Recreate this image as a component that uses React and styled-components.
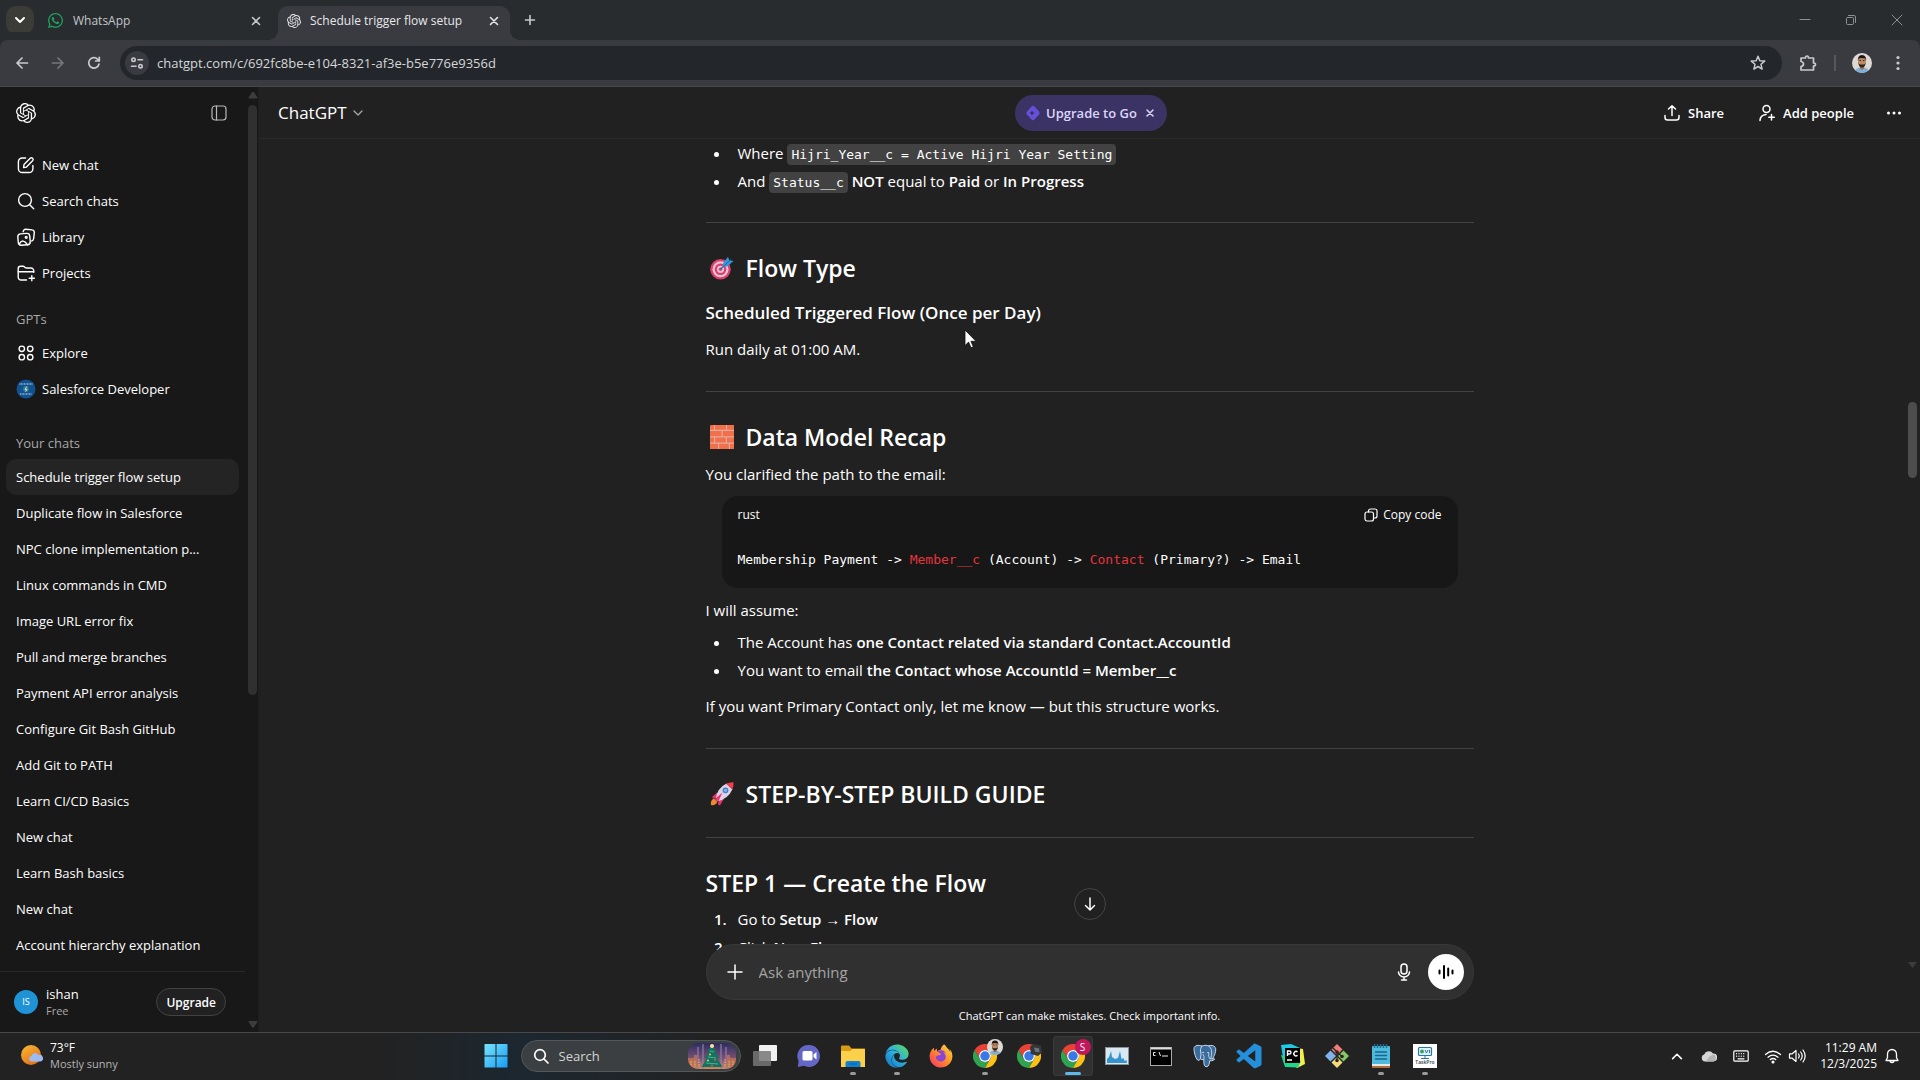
import styled, { createGlobalStyle, css } from "styled-components";
import { FaWhatsapp, FaEdge, FaFirefoxBrowser } from "react-icons/fa";
import { BiLogoVisualStudio } from "react-icons/bi";

const GlobalStyle = createGlobalStyle`
    * { box-sizing: border-box; }
    body {
        margin: 0;
        background-color: #212121;
        color: #fff;
        font-family: "Open Sans", "Noto Sans", sans-serif;
        font-size: 13px;
        overflow: hidden;
    }
    button, input { font: inherit; color: inherit; }
    button {
        display: flex;
        align-items: center;
        justify-content: center;
        padding: 0;
        border: none;
        background: none;
        cursor: pointer;
    }
    a { color: inherit; text-decoration: none; }
    svg { display: block; flex: none; }
`

const Screen = styled.div`
    position: relative;
    display: flex;
    flex-direction: column;
    height: 100vh;
`

/* ---------- browser ---------- */

const TabStrip = styled.header`
    display: flex;
    align-items: stretch;
    height: 40px;
    padding: 6px 0 0 6px;
    background-color: #292c2e;
    font-size: 12px;
`

const TabSearch = styled.button`
    width: 28px;
    height: 28px;
    border-radius: 10px;
    background-color: #3b3b38;
    color: #fff;
`

const Tab = styled.div`
    position: relative;
    display: flex;
    align-items: center;
    gap: 9px;
    width: ${(props) => props.$active ? "232px" : "244px"};
    padding: ${(props) => props.$active ? "0 8px 5px 9px" : "0 14px 5px 13px"};
    border-radius: 10px 10px 0 0;
    color: ${(props) => props.$active ? "#e8e8ea" : "#c3c6ca"};
    background-color: ${(props) => props.$active ? "#393b40" : "transparent"};
    ${(props) => props.$active && css`
        &::before, &::after {
            content: "";
            position: absolute;
            bottom: 0;
            width: 10px;
            height: 10px;
        }
        &::before {
            left: -10px;
            background: radial-gradient(circle at 0 0, transparent 10px, #393b40 10px);
        }
        &::after {
            right: -10px;
            background: radial-gradient(circle at 100% 0, transparent 10px, #393b40 10px);
        }
    `}
`

const TabTitle = styled.span`
    flex: 1;
    line-height: 16px;
`

const NewTab = styled.button`
    width: 28px;
    height: 28px;
    margin-left: 6px;
    color: #c8cace;
`

const WindowButtons = styled.div`
    display: flex;
    margin-left: auto;
    height: 28px;
    color: #8d9093;
    button { width: 46px; }
`

const Toolbar = styled.div`
    display: flex;
    align-items: center;
    height: 47px;
    padding: 0 4px;
    border-bottom: 1px solid #45484d;
    border-radius: 8px 8px 0 0;
    background-color: #393b40;
    box-shadow: 0 -8px 0 #292c2e;
    color: #c7cacf;
`

const ToolButton = styled.button`
    width: 36px;
    height: 34px;
    color: ${(props) => props.$dim ? "#74777b" : "#c7cacf"};
`

const AddressBar = styled.div`
    display: flex;
    flex: 1;
    align-items: center;
    height: 34px;
    margin: 0 8px;
    padding: 0 15px 0 5px;
    border-radius: 17px;
    background-color: #23262a;
`

const SiteInfo = styled.button`
    width: 24px;
    height: 24px;
    border-radius: 50%;
    background-color: #393b40;
`

const Url = styled.input`
    flex: 1;
    margin: 0 8px;
    padding: 0;
    border: none;
    outline: none;
    background: none;
    color: #d5d7da;
    font-size: 13px;
    line-height: 20px;
`

const ToolDivider = styled.div`
    width: 2px;
    height: 16px;
    margin: 0 8px;
    background-color: #54575c;
`

/* ---------- sidebar ---------- */

const AppBody = styled.div`
    display: flex;
    flex: 1;
    min-height: 0;
`

const Sidebar = styled.aside`
    display: flex;
    width: 259px;
    background-color: #181818;
    border-right: 1px solid #1e1e1e;
`

const SidebarContent = styled.div`
    display: flex;
    flex: 1;
    flex-direction: column;
    min-width: 0;
`

const SidebarTop = styled.div`
    display: flex;
    align-items: center;
    justify-content: space-between;
    height: 52px;
    margin-bottom: 8px;
    padding: 0 19px 0 16px;
    button { color: #b8b8b8; }
`

const NavGroup = styled.nav`
    display: flex;
    flex-direction: column;
    margin-bottom: ${(props) => props.$gap}px;
    padding: 0 9px 0 6px;
`

const NavLabel = styled.h2`
    margin: 0;
    padding: 0 10px;
    font-size: 13px;
    font-weight: 400;
    line-height: 32px;
    color: #a8a8a8;
`

const NavItem = styled.a`
    display: flex;
    align-items: center;
    gap: 6px;
    height: 36px;
    padding: 0 10px;
    border-radius: 10px;
    line-height: 20px;
    white-space: nowrap;
    background-color: ${(props) => props.$active ? "#242424" : "transparent"};
`

const Account = styled.div`
    display: flex;
    align-items: center;
    gap: 8px;
    flex: 1;
    margin: 0 3px 0 0;
    padding: 0 19px 0 14px;
    border-top: 1px solid #282828;
`

const Initials = styled.span`
    width: 24px;
    border-radius: 50%;
    background-color: #1f93d6;
    font-size: 9px;
    line-height: 24px;
    text-align: center;
`

const AccountName = styled.div`
    flex: 1;
    line-height: 18px;
    small {
        display: block;
        font-size: 11px;
        line-height: 16px;
        color: #a8a8a8;
    }
`

const UpgradeButton = styled.button`
    height: 28px;
    padding: 0 9px;
    border: 1px solid #424242;
    border-radius: 14px;
    background-color: #212121;
    font-size: 12px;
    font-weight: 600;
`

const SideScroll = styled.div`
    display: flex;
    flex-direction: column;
    align-items: center;
    width: 9px;
    margin-right: 1px;
    padding: 4px 0;
    color: #3c3c3c;
    &::after {
        content: "";
        order: 1;
        flex: 1;
    }
    svg:last-child { order: 2; }
`

const SideThumb = styled.div`
    width: 9px;
    height: 63%;
    margin-top: 6px;
    border-radius: 5px;
    background-color: #303030;
`

/* ---------- conversation ---------- */

const Main = styled.main`
    position: relative;
    display: flex;
    flex: 1;
    flex-direction: column;
    min-width: 0;
`

const ChatHeader = styled.div`
    display: grid;
    grid-template-columns: 1fr auto 1fr;
    align-items: center;
    height: 52px;
    flex: none;
    padding: 0 16px 0 19px;
    border-bottom: 1px solid #2b2b2b;
`

const ModelButton = styled.button`
    justify-self: start;
    gap: 3px;
    font-size: 17px;
    svg { color: #a8a8a8; }
`

const GoPill = styled.div`
    display: flex;
    align-items: center;
    gap: 9px;
    height: 36px;
    padding: 0 13px 0 11px;
    border-radius: 18px;
    background-color: #3b3363;
    button { gap: 6px; }
    color: #dcd6fb;
    font-weight: 600;
`

const HeaderActions = styled.div`
    display: flex;
    align-items: center;
    justify-self: end;
    font-weight: 600;
    button { gap: 7px; }
    button + button { margin-left: 34px; }
    button:last-child { margin-left: 30px; }
`

const Thread = styled.div`
    flex: 1;
    min-height: 0;
    overflow: hidden;
`

const Message = styled.article`
    width: 768px;
    max-width: 100%;
    margin: 0 auto;
    font-size: 15px;
    line-height: 28px;
    p { margin: 8px 0 0; }
    strong { font-weight: 600; }
    ul, ol {
        margin: 4px 0 0;
        padding-left: 25px;
    }
    li { padding-left: 7px; }
    ul:first-child { margin: 0; }
    h2 + p { margin-top: 7px; }
    h2 + ol { margin-top: 6px; }
    ol li::marker { font-weight: 600; }
    li::marker { color: #fff; }
`

const Rule = styled.hr`
    height: 1px;
    margin: 28px 0 29px;
    border: none;
    background-color: #434343;
    ul + &, h2 + & { margin-top: 27px; }
`

const Heading = styled.h2`
    display: flex;
    align-items: center;
    gap: 12px;
    margin: 0;
    padding-left: ${(props) => props.$icon ? "4px" : "0"};
    font-size: 23px;
    font-weight: 600;
    line-height: 32px;
`

const SubHeading = styled.h3`
    margin: 15px 0 0;
    font-size: 17px;
    font-weight: 600;
    line-height: 28px;
`

const InlineCode = styled.code`
    padding: 3px 4px;
    border-radius: 4px;
    background-color: #424242;
    font-family: "DejaVu Sans Mono", monospace;
    font-size: 13px;
    line-height: 16px;
`

const CodeBlock = styled.section`
    height: 92px;
    margin: 8px 16px 0;
    padding: 5px 16px 0;
    border-radius: 16px;
    background-color: #171717;
    font-size: 12px;
    pre {
        margin: 17px 0 0;
        font-family: "DejaVu Sans Mono", monospace;
        font-size: 13px;
        line-height: 28px;
    }
    mark {
        background: none;
        color: #e5343c;
    }
`

const CodeBar = styled.div`
    display: flex;
    justify-content: space-between;
    button { gap: 4px; }
`

const Dock = styled.div`
    position: relative;
    display: flex;
    flex-direction: column;
    align-items: center;
    margin-top: -6px;
    background: linear-gradient(transparent 6px, #212121 6px);
`

const ScrollDown = styled.button`
    position: absolute;
    bottom: 112px;
    left: 50%;
    width: 32px;
    height: 32px;
    margin-left: -16px;
    border: 1px solid #454545;
    border-radius: 50%;
    background-color: #212121;
`

const Composer = styled.form`
    display: flex;
    align-items: center;
    width: 768px;
    max-width: 100%;
    height: 56px;
    padding: 0 9px 0 18px;
    border: 1px solid #383838;
    border-radius: 28px;
    background-color: #303030;
`

const Prompt = styled.input`
    flex: 1;
    margin-left: 14px;
    padding: 0;
    border: none;
    outline: none;
    background: none;
    font-size: 15px;
    &::placeholder {
        color: #a5a5a5;
        opacity: 1;
    }
`

const VoiceButton = styled.button`
    width: 36px;
    height: 36px;
    margin-left: 14px;
    border-radius: 50%;
    background-color: #fff;
    color: #000;
`

const Disclaimer = styled.p`
    margin: 0;
    font-size: 11px;
    line-height: 32px;
`

const PageThumb = styled.div`
    position: absolute;
    top: 315px;
    right: 3px;
    width: 9px;
    height: 76px;
    border-radius: 5px;
    background-color: #4d4d4d;
`

const PageScrollEnd = styled.svg`
    position: absolute;
    right: 3px;
    bottom: 64px;
    color: #3c3c3c;
`

/* ---------- taskbar ---------- */

const Taskbar = styled.footer`
    display: grid;
    grid-template-columns: 1fr auto 1fr;
    align-items: center;
    height: 48px;
    flex: none;
    padding-bottom: 1px;
    border-top: 1px solid #484848;
    background: linear-gradient(90deg, #222 20%, #1c2730 27%, #222 37%);
    font-size: 12px;
    line-height: 16px;
`

const Weather = styled.button`
    justify-self: start;
    gap: 6px;
    margin-left: 20px;
    text-align: left;
    span {
        display: block;
        color: #b4b4b4;
        font-size: 11px;
    }
`

const Apps = styled.div`
    display: flex;
    align-items: center;
`

const TaskApp = styled.button`
    position: relative;
    width: 40px;
    height: 40px;
    margin: 0 2px;
    border-radius: 4px;
    background-color: ${(props) => props.$state === "active" ? "#303030" : "transparent"};
    box-shadow: ${(props) => props.$state === "active" ? "inset 0 0 0 1px #3a3a3a" : "none"};
    &::after {
        content: "";
        position: absolute;
        bottom: 1px;
        left: 50%;
        display: ${(props) => props.$state ? "block" : "none"};
        width: ${(props) => props.$state === "active" ? "16px" : "6px"};
        height: 3px;
        border-radius: 2px;
        background-color: ${(props) => props.$state === "active" ? "#5fb8ea" : "#9a9a9a"};
        transform: translateX(-50%);
    }
`

const TaskSearch = styled.label`
    display: flex;
    align-items: center;
    gap: 10px;
    width: 220px;
    height: 32px;
    margin: 0 2px 0 3px;
    padding: 0 4px 0 11px;
    border: 1px solid #53575a;
    border-radius: 16px;
    background-color: #3b3f42;
    input {
        flex: 1;
        min-width: 0;
        padding: 0;
        border: none;
        outline: none;
        background: none;
        font-size: 13px;
    }
    input::placeholder { color: #d4d4d4; opacity: 1; }
`

const Tray = styled.div`
    display: flex;
    align-items: center;
    justify-self: end;
    padding-right: 20px;
`

const TrayButton = styled.button`
    width: ${(props) => props.$wide ? "56px" : "32px"};
    height: 32px;
    gap: 6px;
`

const Clock = styled.button`
    display: block;
    margin: 0 7px;
    text-align: right;
    font-size: 12px;
`

const Pointer = styled.svg`
    position: absolute;
    top: 329px;
    left: 964px;
    pointer-events: none;
`

/* ---------- icons ---------- */

function Line({ size = 20, box = 20, width = 1.4, children }) {
    return (
        <svg width={size} height={size} viewBox={`0 0 ${box} ${box}`} fill="none" stroke="currentColor"
            strokeWidth={width} strokeLinecap="round" strokeLinejoin="round" aria-hidden="true">
            {children}
        </svg>
    )
}

function Knot({ size }) {
    return (
        <svg width={size} height={size} viewBox="0 0 24 24" fill="currentColor" aria-hidden="true">
            <path d="M22.2819 9.8211a5.9847 5.9847 0 0 0-.5157-4.9108 6.0462 6.0462 0 0 0-6.5098-2.9A6.0651 6.0651 0 0 0 4.9807 4.1818a5.9847 5.9847 0 0 0-3.9977 2.9 6.0462 6.0462 0 0 0 .7427 7.0966 5.98 5.98 0 0 0 .511 4.9107 6.051 6.051 0 0 0 6.5146 2.9001A5.9847 5.9847 0 0 0 13.2599 24a6.0557 6.0557 0 0 0 5.7718-4.2058 5.9894 5.9894 0 0 0 3.9977-2.9001 6.0557 6.0557 0 0 0-.7475-7.0729zm-9.022 12.6081a4.4755 4.4755 0 0 1-2.8764-1.0408l.1419-.0804 4.7783-2.7582a.7948.7948 0 0 0 .3927-.6813v-6.7369l2.02 1.1686a.071.071 0 0 1 .038.052v5.5826a4.504 4.504 0 0 1-4.4945 4.4944zm-9.6607-4.1254a4.4708 4.4708 0 0 1-.5346-3.0137l.142.0852 4.783 2.7582a.7712.7712 0 0 0 .7806 0l5.8428-3.3685v2.3324a.0804.0804 0 0 1-.0332.0615L9.74 19.9502a4.4992 4.4992 0 0 1-6.1408-1.6464zM2.3408 7.8956a4.485 4.485 0 0 1 2.3655-1.9728V11.6a.7664.7664 0 0 0 .3879.6765l5.8144 3.3543-2.0201 1.1685a.0757.0757 0 0 1-.071 0l-4.8303-2.7865A4.504 4.504 0 0 1 2.3408 7.872zm16.5963 3.8558L13.1038 8.364 15.1192 7.2a.0757.0757 0 0 1 .071 0l4.8303 2.7913a4.4944 4.4944 0 0 1-.6765 8.1042v-5.6772a.79.79 0 0 0-.407-.667zm2.0107-3.0231l-.142-.0852-4.7735-2.7818a.7759.7759 0 0 0-.7854 0L9.409 9.2297V6.8974a.0662.0662 0 0 1 .0284-.0615l4.8303-2.7866a4.4992 4.4992 0 0 1 6.6802 4.66zM8.3065 12.863l-2.02-1.1638a.0804.0804 0 0 1-.038-.0567V6.0742a4.4992 4.4992 0 0 1 7.3757-3.4537l-.142.0805L8.704 5.459a.7948.7948 0 0 0-.3927.6813zm1.0976-2.3654l2.602-1.4998 2.6069 1.4998v2.9994l-2.5974 1.4997-2.6067-1.4997Z" />
        </svg>
    )
}

const Cross = ({ size = 16, box = 16, width = 1.6 }) => (
    <Line size={size} box={box} width={width}><path d="M4.5 4.5l7 7M11.5 4.5l-7 7" /></Line>
)

const Chevron = ({ size = 16, width = 1.6 }) => (
    <Line size={size} box={16} width={width}><path d="M4 6l4 4 4-4" /></Line>
)

const EditIcon = () => (
    <Line>
        <path d="M9.6 3H6.2A3.8 3.8 0 0 0 2.4 6.8v6.9a3.8 3.8 0 0 0 3.8 3.8h6.9a3.8 3.8 0 0 0 3.8-3.8v-3.2" />
        <path d="M7.600 12.600l.4-3L14.200 3.300a1.600 1.600 0 0 1 2.400 2.400L10.500 12.100z" />
    </Line>
)

const SearchIcon = () => (
    <Line><circle cx="9" cy="9" r="6.400" /><path d="M13.700 13.700l4 4" /></Line>
)

const LibraryIcon = () => (
    <Line>
        <path d="M7.200 4.700A2.400 2.400 0 0 1 9.800 2.300l6.200.6a2.500 2.500 0 0 1 2.300 2.800l-.7 6.100a2.500 2.500 0 0 1-1.800 2.200" />
        <rect x="2" y="6.600" width="12" height="11.400" rx="3" transform="rotate(-5 8 12)" />
        <path d="M3.400 16.800c2.200-3.800 5-3.800 8.200 1" /><circle cx="10.200" cy="10.300" r=".9" />
    </Line>
)

const ProjectsIcon = () => (
    <Line>
        <path d="M10.500 17H5.100a2.900 2.900 0 0 1-2.900-2.900V5.600A2.300 2.300 0 0 1 4.500 3.300h2.600c1.600 0 1.800 1.700 3.400 1.700h4.400A2.700 2.700 0 0 1 17.700 8v1.200" />
        <path d="M2.200 8.700h15.500M15.800 12.600v5.200M13.200 15.200h5.200" />
    </Line>
)

const ExploreIcon = () => (
    <Line>
        {[5.8, 14.2].map((x) => [5.8, 14.2].map((y) => <circle key={`${x}-${y}`} cx={x} cy={y} r="2.700" />))}
    </Line>
)

const GptBadge = () => (
    <svg width="20" height="20" viewBox="0 0 20 20" aria-hidden="true">
        <circle cx="10" cy="10" r="9.500" fill="#125290" />
        <path d="M3.500 5h13M4 15h12" stroke="#a9c6e4" strokeWidth="1.400" strokeDasharray="1 .5" opacity=".8" />
        <circle cx="10" cy="10" r="3" fill="#2d7a9a" /><path d="M10.800 7.500L9 10.400h2L9.500 12.600" fill="none" stroke="#d9e6b4" />
    </svg>
)

const Face = ({ size, back = "#ddd9d4" }) => (
    <svg width={size} height={size} viewBox="0 0 20 20" aria-hidden="true">
        <circle cx="10" cy="10" r="10" fill={back} />
        <path d="M3.500 17.600q1-3 5-3.200h3q4 .2 5 3.200A10 10 0 0 1 3.500 17.600z" fill="#7fb0d6" />
        <path d="M8 12h4v3.500l-2 1.500-2-1.500z" fill="#a56f4d" />
        <ellipse cx="10" cy="8.500" rx="3.800" ry="5" fill="#c08a63" />
        <path d="M6 8.500Q5.200 2 10 2t4 6.500L13.300 5.600Q10 4.300 6.700 5.600z" fill="#1c1512" />
        <path d="M6.200 9q.4 5.500 3.800 5.500T13.800 9q-.6 2.500-2.300 2.600h-3Q6.800 11.500 6.200 9z" fill="#33231c" />
        <path d="M7.500 7.500h1.600M10.900 7.500h1.600" stroke="#1c1512" strokeWidth=".8" />
    </svg>
)

const TargetIcon = () => (
    <svg width="24" height="24" viewBox="0 0 24 24" role="img" aria-label="target">
        <circle cx="10.500" cy="13.300" r="10.300" fill="#dc3f6c" /><circle cx="10.500" cy="13.300" r="8" fill="#f1c3d6" />
        <circle cx="10.500" cy="13.300" r="5.800" fill="#dc3f6c" /><circle cx="10.500" cy="13.300" r="3.600" fill="#f1c3d6" />
        <circle cx="10.500" cy="13.300" r="1.700" fill="#dc3f6c" />
        <path d="M10.500 13.300L17 7" stroke="#1c6fb5" strokeWidth="1.300" />
        <path d="M13 7.500L18 .8l1.200 3.400 4.300.8L17 10.500l-4 .6z" fill="#2f9ae0" /><path d="M13.500 10.500l7-6.800" stroke="#1769ad" />
    </svg>
)

const BrickIcon = () => (
    <svg width="24" height="24" viewBox="0 0 24 24" role="img" aria-label="brick">
        <rect width="24" height="24" rx="2" fill="#e9a898" />
        <path d="M1 0h3v4.700H0V1zM5 0h11v4.700H5zM17 0h7v4.700h-7zM0 6h11.500v5.200H0zM12.700 6H24v5.200H12.700zM0 12.500h4v5H0zM5.200 12.500h10.600v5H5.200zM17 12.500h7v5h-7zM0 18.800h8V24H0zM9.200 18.800h9.600V24H9.200zM20 18.800h4V24h-4z" fill="#f0704c" />
    </svg>
)

const RocketIcon = () => (
    <svg width="24" height="24" viewBox="0 0 24 24" role="img" aria-label="rocket">
        <path d="M1 23q-.8-5 3-6.500l3.300 3.300Q5.500 24 1 23z" fill="#f08a2c" />
        <path d="M7 10.500L2 15l1.500 1.800 5-1.500zM13.800 17L10 23.500l-2.300-1.300 1.500-5.500z" fill="#e0346b" />
        <path d="M5.500 17.500Q7 6 16.500 1.500L22.500 7.200Q18 17 7.500 19.300z" fill="#dcd3e6" />
        <path d="M16 1.800Q20 0 23.500.3q.5 3.700-1.300 7.300z" fill="#ee3f52" />
        <path d="M6 16l6.500-5.500L8.500 19 5.500 18.500z" fill="#ee3470" />
        <circle cx="15.500" cy="8.300" r="2.900" fill="#3f80c4" /><circle cx="15.500" cy="8.300" r="1.600" fill="#84b6ea" />
    </svg>
)

const WindowsIcon = () => (
    <svg width="24" height="24" viewBox="0 0 24 24" aria-hidden="true">
        <defs><linearGradient id="win" gradientUnits="userSpaceOnUse" x1="0" y1="0" x2="24" y2="24"><stop stopColor="#7ae4fd" /><stop offset="1" stopColor="#149cf2" /></linearGradient></defs>
        <path d="M1 0h10.500v11.500H.5V.5zM12.500 0H23l.5.5v11h-11zM.5 12.500h11v11H1l-.5-.5zM12.500 12.500h11V23l-.5.500H12.500z" fill="url(#win)" />
    </svg>
)

const TreePicture = () => (
    <svg width="48" height="26" viewBox="0 0 48 26" aria-hidden="true">
        <defs>
            <clipPath id="treeClip"><rect width="48" height="26" rx="10" /></clipPath>
            <linearGradient id="sky" x2="0" y2="1"><stop stopColor="#2c2d60" /><stop offset=".6" stopColor="#7a5276" /><stop offset="1" stopColor="#d98a55" /></linearGradient>
        </defs>
        <g clipPath="url(#treeClip)">
            <rect width="48" height="26" fill="url(#sky)" />
            <path d="M9 26V4h2v22zM14 26V1h2v25zM32 26V1h2v25zM37 26V4h2v22z" fill="#8c7fae" opacity=".6" />
            <path d="M0 15h6v-3h3v14H0zM48 15h-6v-3h-3v14h9z" fill="#c4744f" opacity=".8" />
            <path d="M3 18v6M7 18v6M11 16v8M37 16v8M41 18v6M45 18v6" stroke="#f3b76f" strokeDasharray="1.500 1" />
            <path d="M24 2L29 9h-2l4.500 6H29l5.500 9h-21L19 15h-2.500L21 9h-2z" fill="#147262" />
            <path d="M22 8l4 1M20 14l8 1M18 20l12 1" stroke="#45b48c" />
            <circle cx="24" cy="3" r="2" fill="#ffe1a2" /><circle cx="22" cy="11.500" r="1" fill="#f1ce51" />
            <circle cx="27" cy="17" r="1" fill="#e6525b" /><circle cx="20" cy="17.500" r="1" fill="#f1ce51" />
            <circle cx="24" cy="22.500" r="1" fill="#e6525b" />
        </g>
    </svg>
)

const TaskViewIcon = () => (
    <svg width="24" height="24" viewBox="0 0 24 24" aria-hidden="true">
        <rect x="6" y="1" width="18" height="16" rx="1" fill="#f1f1f1" />
        <rect y="7" width="18" height="15" rx="1" fill="#777" opacity=".85" />
    </svg>
)

const MeetIcon = () => (
    <svg width="24" height="24" viewBox="0 0 24 24" aria-hidden="true">
        <path d="M12 1a11 11 0 1 1-5 20.800L.8 23l.8-6A11 11 0 0 1 12 1z" fill="#6567c6" />
        <rect x="5.500" y="7" width="10" height="9.500" rx="1.500" fill="#fff" /><path d="M16.500 10.500l3-2.500v7.500l-3-2.500z" fill="#fff" />
    </svg>
)

const FolderIcon = () => (
    <svg width="24" height="24" viewBox="0 0 24 24" aria-hidden="true">
        <path d="M0 2.500q0-1 1-1h7l2.500 3H24V14H0z" fill="#d99a15" />
        <path d="M0 7h9l2.500-2H23q1 0 1 1v17H0z" fill="#fbd04a" />
        <path d="M4.500 23v-4q0-2 2-2h11q2 0 2 2v4z" fill="#1380cf" /><path d="M8 20h8" stroke="#0b5ea6" />
    </svg>
)

const ChromeIcon = () => (
    <svg width="24" height="24" viewBox="0 0 48 48" aria-hidden="true">
        <path d="M24 12H44.800A24 24 0 0 0 3.200 12L13.600 30A12 12 0 0 1 24 12z" fill="#e94235" />
        <path d="M13.600 30L3.200 12A24 24 0 0 0 24 48L34.400 30A12 12 0 0 1 13.600 30z" fill="#2fa350" />
        <path d="M34.400 30L24 48A24 24 0 0 0 44.800 12H24A12 12 0 0 1 34.400 30z" fill="#fbc116" />
        <circle cx="24" cy="24" r="12" fill="#fff" /><circle cx="24" cy="24" r="9.500" fill="#3b78e7" />
    </svg>
)

const ProfileBadge = styled.span`
    position: absolute;
    top: ${(props) => props.$small ? "8px" : "3px"};
    right: ${(props) => props.$small ? "7px" : "2px"};
    width: ${(props) => props.$small ? "12px" : "16px"};
    height: ${(props) => props.$small ? "12px" : "16px"};
    border-radius: ${(props) => props.$small ? "3px" : "50%"};
    background-color: ${(props) => props.$color};
    font-size: 10px;
    line-height: 16px;
    text-align: center;
`

const CubeIcon = () => (
    <svg width="12" height="12" viewBox="0 0 12 12" aria-hidden="true">
        <path d="M3 0l8 1.500 1 7L8 12 1 10 0 3z" fill="#33373a" /><path d="M4 3.500l5 .8.5 4-4.500-.6z" fill="#6d7377" />
    </svg>
)

const MonitorIcon = () => (
    <svg width="24" height="18" viewBox="0 0 24 18" aria-hidden="true">
        <rect x=".5" y=".5" width="23" height="17" fill="#d8e9f3" stroke="#8b9298" />
        <path d="M2 16v-4l2-2 2-6 1 6 3 2 3-1 2-7 1.500 8 2-1 1 3 2-1 .5 3z" fill="#3793cc" />
    </svg>
)

const TerminalIcon = () => (
    <svg width="22" height="19" viewBox="0 0 22 19" aria-hidden="true">
        <rect x=".5" y=".5" width="21" height="18" fill="#000" stroke="#aaa" /><path d="M1 1.500h20" stroke="#ddd" strokeWidth="2" />
        <path d="M5.500 5.500h-2v3h2M7 6v.1M7 8v.1M9 5l1.500 4M12 9h6" stroke="#eee" fill="none" />
    </svg>
)

const ElephantIcon = () => (
    <svg width="24" height="24" viewBox="0 0 24 24" fill="#3a6c9c" stroke="#c8d7e4" strokeLinejoin="round" strokeLinecap="round" aria-hidden="true">
        <path d="M8.500 2Q3 0 1.200 3.500C.3 6 2.500 14 4.500 16q1.500 1 2.800-.8L8.500 14z" />
        <path d="M15 2q5-1.800 7.300 1.500c1.500 2.500-1 9-3.300 12l-3-1z" />
        <path d="M8.500 2.200q5-2.200 8 .5c3 3 2.500 8 1 12.300l3.700-.3q1.500.3-.7 1.500-2 .9-3.800.6-.5 4.200-1.700 5.400-2.200 1.500-3.500-.5-.8-2-.7-6.200-3.500.8-3.500-1.300l.7-3.200Q6.500 5 8.500 2.200z" />
        <path d="M9.200 8.500h1.500M14.500 8.500h1.300M10.800 15.500q1-3-.5-5M16.500 14.500q-1.500-2.500-.8-5" fill="none" strokeWidth=".9" />
    </svg>
)

const PyCharmIcon = () => (
    <svg width="24" height="24" viewBox="0 0 24 24" aria-hidden="true">
        <path d="M0 1l10-1 9 4-4 12L3 20z" fill="#21c9e8" /><path d="M16 4l6 1 2 15-8 4-6-5z" fill="#f4ee4a" />
        <path d="M0 11l4 12 13 .5L20 17z" fill="#1fd68b" /><rect x="4" y="4" width="15" height="15" fill="#000" />
        <path d="M6 16h5M6.500 12V7h2a1.500 1.500 0 0 1 0 3h-2M16.500 8a2.200 2.200 0 1 0 0 3.300" stroke="#fff" strokeWidth="1.400" fill="none" />
    </svg>
)

const GitIcon = () => (
    <svg width="24" height="24" viewBox="0 0 24 24" aria-hidden="true">
        <path d="M12 0l5.500 5.500L12 11 6.500 5.500z" fill="#ee7d77" /><path d="M5.500 6.500L11 12l-5.500 5.500L0 12z" fill="#7fb1ef" />
        <path d="M18.500 6.500L24 12l-5.500 5.500L13 12z" fill="#84c866" /><path d="M12 13l5.500 5.500L12 24l-5.500-5.500z" fill="#f5dc7a" />
        <path d="M8 4l4 4v8.500M12 8l5 4.500" stroke="#2d2522" strokeWidth="1.400" fill="none" />
        <circle cx="12" cy="8" r="1.800" fill="#2d2522" /><circle cx="12" cy="16.500" r="1.800" fill="#2d2522" /><circle cx="17" cy="12.500" r="1.800" fill="#2d2522" />
    </svg>
)

const NotepadIcon = () => (
    <svg width="20" height="24" viewBox="0 0 20 24" aria-hidden="true">
        <path d="M1 22h18v2H1z" fill="#b06a3b" /><path d="M1 19h18v3H1z" fill="#e8e8e8" />
        <rect x="1" y="2" width="18" height="18" rx="1" fill="#4fbbdc" />
        <path d="M3.500 0v4M6.500 0v4M9.500 0v4M12.500 0v4M15.500 0v4" stroke="#1d6f94" strokeWidth="1.400" />
        <path d="M4.500 8h11M4.500 11.500h11M4.500 15h11" stroke="#17668c" strokeWidth="1.400" strokeLinecap="round" />
    </svg>
)

const TaskProIcon = () => (
    <svg width="24" height="24" viewBox="0 0 24 24" aria-hidden="true">
        <rect width="24" height="24" fill="#fff" />
        <rect x="5.500" y="3.500" width="13" height="8" rx="1" fill="#e2f2fa" stroke="#2476ac" strokeWidth="1.200" />
        <circle cx="9" cy="7.500" r="2" fill="#3ba35d" /><path d="M12 6l1.500 3L15 6M16.500 6v3M8 14.500h8M12 12v2" stroke="#2476ac" fill="none" />
        <text x="12" y="20" textAnchor="middle" fontSize="5" fontWeight="600" fill="#33414c">TaskPro</text>
    </svg>
)

const AppGradients = styled.svg`
    position: absolute;
    width: 0;
    height: 0;
`

const EdgeLogo = styled(FaEdge)`
    path { fill: url(#edge); }
`

const FirefoxLogo = styled(FaFirefoxBrowser)`
    border-radius: 50%;
    background: radial-gradient(circle, #8a45d6 35%, transparent 36%);
    path { fill: url(#firefox); }
`

const SidebarArrow = ({ down }) => (
    <svg width="10" height="8" viewBox="0 0 10 8" fill="currentColor" aria-hidden="true">
        <path d={down ? "M1 1h8q.8.200.4 1L6 7.300q-1 .9-2 0L.6 2Q.300 1.200 1 1z" : "M1 7.500h8q.8-.200.4-1L6 1.200q-1-.9-2 0L.6 6.500Q.300 7.300 1 7.500z"} />
    </svg>
)

/* ---------- data ---------- */

const MENU = [
    { text: "New chat", Icon: EditIcon },
    { text: "Search chats", Icon: SearchIcon },
    { text: "Library", Icon: LibraryIcon },
    { text: "Projects", Icon: ProjectsIcon },
]

const GPTS = [
    { text: "Explore", Icon: ExploreIcon },
    { text: "Salesforce Developer", Icon: GptBadge },
]

const CHATS = [
    "Schedule trigger flow setup", "Duplicate flow in Salesforce", "NPC clone implementation p...",
    "Linux commands in CMD", "Image URL error fix", "Pull and merge branches",
    "Payment API error analysis", "Configure Git Bash GitHub", "Add Git to PATH",
    "Learn CI/CD Basics", "New chat", "Learn Bash basics", "New chat", "Account hierarchy explanation",
]

const APPS = [
    { name: "Task view", icon: <TaskViewIcon /> },
    { name: "Chat", icon: <MeetIcon /> },
    { name: "File Explorer", icon: <FolderIcon />, state: "open" },
    { name: "Edge", icon: <EdgeLogo size={24} />, state: "open" },
    { name: "Firefox", icon: <FirefoxLogo size={24} /> },
    { name: "Chrome, work profile", icon: <><ChromeIcon /><ProfileBadge><Face size={16} /></ProfileBadge></>, state: "open" },
    { name: "Chrome, second profile", icon: <><ChromeIcon /><ProfileBadge $small><CubeIcon /></ProfileBadge></> },
    { name: "Chrome", icon: <><ChromeIcon /><ProfileBadge $color="#c2185b">S</ProfileBadge></>, state: "active" },
    { name: "Performance monitor", icon: <MonitorIcon /> },
    { name: "Command prompt", icon: <TerminalIcon /> },
    { name: "PostgreSQL", icon: <ElephantIcon /> },
    { name: "Visual Studio Code", icon: <BiLogoVisualStudio size={30} color="#2490dc" /> },
    { name: "PyCharm", icon: <PyCharmIcon /> },
    { name: "Git", icon: <GitIcon /> },
    { name: "Notepad", icon: <NotepadIcon />, state: "open" },
    { name: "TaskPro", icon: <TaskProIcon />, state: "open" },
]

/* ---------- sections ---------- */

function Browser() {
    return (
        <>
            <TabStrip>
                <TabSearch aria-label="Search tabs"><Chevron width={2} /></TabSearch>
                <Tab>
                    <FaWhatsapp size={17} color="#1fa463" />
                    <TabTitle>WhatsApp</TabTitle>
                    <button aria-label="Close WhatsApp"><Cross /></button>
                </Tab>
                <Tab $active>
                    <Knot size={14} />
                    <TabTitle>Schedule trigger flow setup</TabTitle>
                    <button aria-label="Close tab"><Cross /></button>
                </Tab>
                <NewTab aria-label="New tab"><Line size={16} box={16} width={1.6}><path d="M8 3.500v9M3.500 8h9" /></Line></NewTab>
                <WindowButtons>
                    <button aria-label="Minimize"><Line size={12} box={12} width={1}><path d="M1 5.500h10" /></Line></button>
                    <button aria-label="Restore">
                        <Line size={12} box={12} width={1}><rect x="1.500" y="3.500" width="7" height="7" rx="1" /><path d="M3.500 1.500H9A1.500 1.500 0 0 1 10.500 3v5.500" /></Line>
                    </button>
                    <button aria-label="Close"><Line size={12} box={12} width={1}><path d="M1 1l10 10M11 1L1 11" /></Line></button>
                </WindowButtons>
            </TabStrip>
            <Toolbar>
                <ToolButton aria-label="Back"><Line size={16} box={16} width={1.7}><path d="M13.500 8H3M8 3L3 8l5 5" /></Line></ToolButton>
                <ToolButton $dim aria-label="Forward"><Line size={16} box={16} width={1.7}><path d="M2.500 8H13M8 3l5 5-5 5" /></Line></ToolButton>
                <ToolButton aria-label="Reload"><Line size={16} box={16} width={1.7}><path d="M13 9a5.200 5.200 0 1 1-1.300-4.700L13.300 6M13.300 2.300V6H9.600" /></Line></ToolButton>
                <AddressBar>
                    <SiteInfo aria-label="Site information">
                        <Line size={16} box={16} width={1.6}><circle cx="4.500" cy="4.700" r="1.700" /><path d="M9 4.700h4.500M2.500 11.200H7" /><circle cx="11.500" cy="11.200" r="1.700" /></Line>
                    </SiteInfo>
                    <Url aria-label="Address" defaultValue="chatgpt.com/c/692fc8be-e104-8321-af3e-b5e776e9356d" />
                    <button aria-label="Bookmark"><Line size={18} box={18} width={1.5}><path d="M9 2.200l1.800 4.500 4.900.4-3.700 3.200 1.100 4.800L9 12.500l-4.100 2.600L6 10.300 2.300 7.100l4.900-.4z" /></Line></button>
                </AddressBar>
                <ToolButton aria-label="Extensions">
                    <Line size={20} box={20} width={1.7}><path d="M3 5h4.500Q7.500 3 9 3t1.500 2h5v5Q17.500 10 17.500 11.500T15.500 13v4H3v-3.500q2.500-.5 2.500-2.500T3 8.500z" /></Line>
                </ToolButton>
                <ToolDivider />
                <ToolButton aria-label="Profile"><Face size={20} /></ToolButton>
                <ToolButton aria-label="Menu">
                    <svg width="16" height="16" viewBox="0 0 16 16" fill="currentColor"><circle cx="8" cy="2.500" r="1.600" /><circle cx="8" cy="8" r="1.600" /><circle cx="8" cy="13.500" r="1.600" /></svg>
                </ToolButton>
            </Toolbar>
        </>
    )
}

function ChatSidebar() {
    return (
        <Sidebar>
            <SidebarContent>
                <SidebarTop>
                    <a href="#home" aria-label="Home"><Knot size={20} /></a>
                    <button aria-label="Close sidebar">
                        <Line size={20} box={20} width={1.2}><rect x="3" y="3" width="14" height="14" rx="3" /><path d="M7.500 3v14" /></Line>
                    </button>
                </SidebarTop>
                <NavGroup $gap={12}>
                    {MENU.map(({ text, Icon }) => <NavItem key={text} href="#menu"><Icon />{text}</NavItem>)}
                </NavGroup>
                <NavGroup $gap={20}>
                    <NavLabel>GPTs</NavLabel>
                    {GPTS.map(({ text, Icon }) => <NavItem key={text} href="#gpts"><Icon />{text}</NavItem>)}
                </NavGroup>
                <NavGroup $gap={8}>
                    <NavLabel>Your chats</NavLabel>
                    {CHATS.map((title, index) => <NavItem key={index} href="#chat" $active={index === 0}>{title}</NavItem>)}
                </NavGroup>
                <Account>
                    <Initials>IS</Initials>
                    <AccountName>ishan<small>Free</small></AccountName>
                    <UpgradeButton>Upgrade</UpgradeButton>
                </Account>
            </SidebarContent>
            <SideScroll>
                <SidebarArrow />
                <SideThumb />
                <SidebarArrow down />
            </SideScroll>
        </Sidebar>
    )
}

function Conversation() {
    return (
        <Message>
            <ul>
                <li>Where <InlineCode>Hijri_Year__c = Active Hijri Year Setting</InlineCode></li>
                <li>And <InlineCode>Status__c</InlineCode> <strong>NOT</strong> equal to <strong>Paid</strong> or <strong>In Progress</strong></li>
            </ul>
            <Rule />
            <Heading $icon><TargetIcon />Flow Type</Heading>
            <SubHeading>Scheduled Triggered Flow (Once per Day)</SubHeading>
            <p>Run daily at 01:00 AM.</p>
            <Rule />
            <Heading $icon><BrickIcon />Data Model Recap</Heading>
            <p>You clarified the path to the email:</p>
            <CodeBlock>
                <CodeBar>
                    <span>rust</span>
                    <button>
                        <Line size={16} box={16} width={1.2}><rect x="2" y="5" width="8.500" height="9" rx="2" /><path d="M5.500 5V4a2 2 0 0 1 2-2H12a2 2 0 0 1 2 2v5a2 2 0 0 1-2 2h-1.500" /></Line>
                        Copy code
                    </button>
                </CodeBar>
                <pre>Membership Payment -&gt; <mark>Member__c</mark> (Account) -&gt; <mark>Contact</mark> (Primary?) -&gt; Email</pre>
            </CodeBlock>
            <p>I will assume:</p>
            <ul>
                <li>The Account has <strong>one Contact related via standard Contact.AccountId</strong></li>
                <li>You want to email <strong>the Contact whose AccountId = Member__c</strong></li>
            </ul>
            <p>If you want Primary Contact only, let me know — but this structure works.</p>
            <Rule />
            <Heading $icon><RocketIcon />STEP-BY-STEP BUILD GUIDE</Heading>
            <Rule />
            <Heading>STEP 1 — Create the Flow</Heading>
            <ol>
                <li>Go to <strong>Setup → Flow</strong></li>
                <li>Click <strong>New Flow</strong></li>
            </ol>
        </Message>
    )
}

function Chat() {
    return (
        <Main>
            <ChatHeader>
                <ModelButton>ChatGPT<Chevron size={16} width={1.3} /></ModelButton>
                <GoPill>
                    <button>
                        <svg width="14" height="16" viewBox="0 0 14 16" aria-hidden="true">
                            <path d="M5.800 1.300q1.200-1 2.400 0l5 5.500q.8 1.200 0 2.400l-5 5.500q-1.200 1-2.400 0l-5-5.500q-.8-1.200 0-2.400z" fill="#6650d8" />
                            <path d="M6 5.500q.4 2.300 2.700 2.500Q6.400 8.200 6 10.500 5.600 8.200 3.300 8 5.600 7.800 6 5.500z" fill="#332a63" />
                        </svg>
                        Upgrade to Go
                    </button>
                    <button aria-label="Dismiss"><Line size={8} box={8} width={1.5}><path d="M1 1l6 6M7 1L1 7" /></Line></button>
                </GoPill>
                <HeaderActions>
                    <button>
                        <Line size={18} box={18} width={1.5}><path d="M2 11.500v2A2.500 2.500 0 0 0 4.500 16h9a2.500 2.500 0 0 0 2.500-2.500v-2M9 11.500V2M5.500 5L9 1.700 12.500 5" /></Line>
                        Share
                    </button>
                    <button>
                        <Line size={18} box={18} width={1.5}><circle cx="8.500" cy="5" r="3.500" /><path d="M2 16.500q.3-5.500 6-6M13.500 10.500v5.500M10.800 13.300h5.500" /></Line>
                        Add people
                    </button>
                    <button aria-label="More">
                        <svg width="20" height="20" viewBox="0 0 20 20" fill="currentColor"><circle cx="4.500" cy="10" r="1.500" /><circle cx="10" cy="10" r="1.500" /><circle cx="15.500" cy="10" r="1.500" /></svg>
                    </button>
                </HeaderActions>
            </ChatHeader>
            <Thread><Conversation /></Thread>
            <Dock>
                <ScrollDown aria-label="Scroll to bottom">
                    <Line size={16} box={16} width={1.5}><path d="M8 2v12M3.500 9.500L8 14l4.500-4.500" /></Line>
                </ScrollDown>
                <Composer onSubmit={(event) => event.preventDefault()}>
                    <button type="button" aria-label="Add files"><Line size={20} box={20} width={1.5}><path d="M10 3v14M3 10h14" /></Line></button>
                    <Prompt aria-label="Message" placeholder="Ask anything" />
                    <button type="button" aria-label="Dictate">
                        <Line size={20} box={20} width={1.5}><rect x="7" y="2" width="6" height="10" rx="3" /><path d="M4.500 10a5.500 5 0 0 0 11 0M10 15v3M7.500 18h5" /></Line>
                    </button>
                    <VoiceButton type="button" aria-label="Voice mode">
                        <Line size={18} box={18} width={2}><path d="M2.500 7.500v3M7 3v12M11.200 5.500v7M15.500 7.500v3" /></Line>
                    </VoiceButton>
                </Composer>
                <Disclaimer>ChatGPT can make mistakes. Check important info.</Disclaimer>
            </Dock>
            <PageThumb />
            <PageScrollEnd width="9" height="6" viewBox="0 0 9 6" fill="currentColor" aria-hidden="true"><path d="M0 0h9L4.500 6z" /></PageScrollEnd>
        </Main>
    )
}

function WindowsTaskbar() {
    return (
        <Taskbar>
            <Weather>
                <svg width="24" height="24" viewBox="0 0 24 24" aria-hidden="true">
                    <defs><linearGradient id="sun" x2=".6" y2="1"><stop stopColor="#f6bd36" /><stop offset="1" stopColor="#e8701a" /></linearGradient></defs>
                    <circle cx="11" cy="11" r="10" fill="url(#sun)" />
                    <path d="M11 17.500a2.800 2.800 0 0 1 .3-5.400A4 4 0 0 1 18.600 11a3.300 3.300 0 0 1 2 6.500z" fill="#9dbdf2" />
                </svg>
                <div>73°F<span>Mostly sunny</span></div>
            </Weather>
            <Apps>
                <TaskApp aria-label="Start"><WindowsIcon /></TaskApp>
                <TaskSearch>
                    <Line size={16} box={16} width={1.7}><circle cx="7" cy="7" r="5.300" /><path d="M11 11l4 4" /></Line>
                    <input aria-label="Search" placeholder="Search" />
                    <TreePicture />
                </TaskSearch>
                {APPS.map(({ name, icon, state }) => (
                    <TaskApp key={name} aria-label={name} $state={state}>{icon}</TaskApp>
                ))}
            </Apps>
            <Tray>
                <TrayButton aria-label="Show hidden icons"><Line size={14} box={16} width={1.8}><path d="M3 11l5-5 5 5" /></Line></TrayButton>
                <TrayButton aria-label="OneDrive">
                    <svg width="16" height="12" viewBox="0 0 16 12" aria-hidden="true">
                        <path d="M4 11.500A3.700 3.700 0 0 1 3.300 4.300 5 5 0 0 1 12 3.500a4 4 0 0 1 .5 8z" fill="#d6d6d6" /><path d="M5 11.500q3-6 8-7a4 4 0 0 1-.5 7z" fill="#b3b3b3" />
                    </svg>
                </TrayButton>
                <TrayButton aria-label="Touch keyboard">
                    <Line size={16} box={16} width={1.2}><rect x=".8" y="2.800" width="14.400" height="10.400" rx="1" /><path d="M3.500 5.700h9.500M3.500 8.200h9.500" strokeDasharray=".1 2.300" /><path d="M5 10.800h6" /></Line>
                </TrayButton>
                <TrayButton $wide aria-label="Network and volume">
                    <Line size={18} box={18} width={1.3}><path d="M1.500 7.500q7.500-6.500 15 0M4 10.200q5-4.200 10 0M6.300 12.600q2.700-2.200 5.400 0" /><circle cx="9" cy="15" r=".9" fill="currentColor" /></Line>
                    <Line size={18} box={18} width={1.2}><path d="M1.500 6.800h2.700L8 3.500v11l-3.800-3.300H1.500zM10.500 7q1.500 2 0 4M12.700 5q3 4 0 8M15 3q4.300 6 0 12" /></Line>
                </TrayButton>
                <Clock>11:29 AM<br />12/3/2025</Clock>
                <button aria-label="Notifications">
                    <Line size={16} box={16} width={1.3}><path d="M2 12.500l1.500-3V6a4.500 4.500 0 0 1 9 0v3.500l1.500 3zM6 12.500a2 2 0 0 0 4 0" /></Line>
                </button>
            </Tray>
        </Taskbar>
    )
}

export default function App() {
    return (
        <Screen>
            <GlobalStyle />
            <AppGradients aria-hidden="true">
                <defs>
                    <linearGradient id="edge" x1="0" y1="1" x2="1" y2="0"><stop stopColor="#1172c4" /><stop offset=".5" stopColor="#2daee0" /><stop offset="1" stopColor="#63de52" /></linearGradient>
                    <linearGradient id="firefox" x1="1" y1="0" x2="0" y2="1"><stop stopColor="#ffe23d" /><stop offset=".5" stopColor="#ff8a2a" /><stop offset="1" stopColor="#f5306c" /></linearGradient>
                </defs>
            </AppGradients>
            <Browser />
            <AppBody>
                <ChatSidebar />
                <Chat />
            </AppBody>
            <WindowsTaskbar />
            <Pointer width="13" height="20" viewBox="0 0 13 20" aria-hidden="true">
                <path d="M1 1v15.500l3.600-3.400 2.400 5.600 2.300-1-2.400-5.400H12z" fill="#fff" stroke="#111" strokeWidth=".8" />
            </Pointer>
        </Screen>
    )
}
